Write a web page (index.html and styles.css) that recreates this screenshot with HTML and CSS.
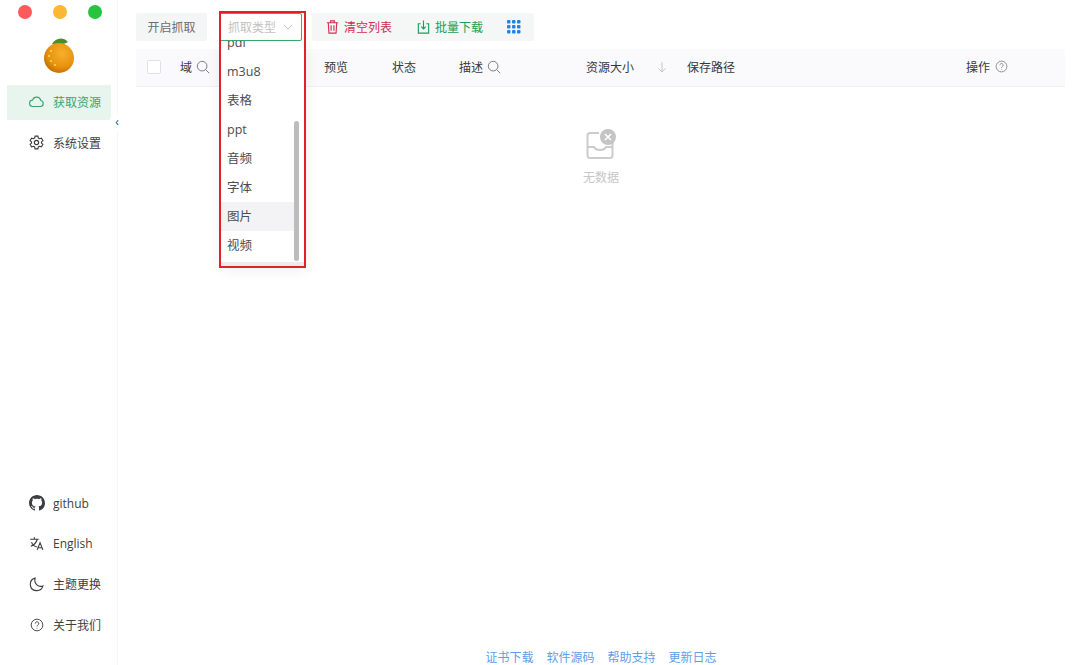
FILE: index.html
```html
<!DOCTYPE html>
<html lang="zh-CN">
<head>
  <meta charset="UTF-8" />
  <meta name="viewport" content="width=device-width, initial-scale=1.0" />
  <title>获取资源</title>
  <link rel="stylesheet" href="styles.css">
</head>
<body>
  <aside class="sidebar">
    <div class="traffic">
      <span class="dot dot-red"></span>
      <span class="dot dot-yellow"></span>
      <span class="dot dot-green"></span>
    </div>
    <div class="logo">
      <svg width="34" height="38" viewBox="0 0 34 38">
        <defs>
          <radialGradient id="orange" cx="0.6" cy="0.35" r="0.75">
            <stop offset="0" stop-color="#f6b02c"/>
            <stop offset="0.6" stop-color="#e8930c"/>
            <stop offset="1" stop-color="#b76206"/>
          </radialGradient>
        </defs>
        <path d="M10 8C13 2 21 0 26 6C21 9 15 9 10 8Z" fill="#4f8a2e"/>
        <circle cx="17" cy="22" r="15" fill="url(#orange)"/>
        <circle cx="9" cy="15" r="1" fill="#fbdc5c"/>
        <circle cx="7" cy="20" r="1" fill="#fbdc5c"/>
        <circle cx="9" cy="25" r="1" fill="#fbdc5c"/>
        <circle cx="13" cy="29" r="1" fill="#fbdc5c"/>
      </svg>
    </div>
    <nav class="menu menu-top">
      <a class="menu-item active">
        <svg class="menu-icon" viewBox="0 0 24 24"><path d="M7 19a4.500 4.500 0 0 1-.6-9A6 6 0 0 1 18 10.500a4.300 4.300 0 0 1-.5 8.500Z"/></svg>
        获取资源
      </a>
      <a class="menu-item">
        <svg class="menu-icon" viewBox="0 0 24 24"><circle cx="12" cy="12" r="3"/><path d="M10 3h4l.6 2.700 1.800 1 2.600-.8 2 3.400-2 1.900v1.600l2 1.900-2 3.400-2.600-.8-1.800 1L14 21h-4l-.6-2.700-1.800-1-2.600.8-2-3.400 2-1.900v-1.600l-2-1.900 2-3.400 2.600.8 1.800-1Z"/></svg>
        系统设置
      </a>
    </nav>
    <span class="collapse">‹</span>
    <nav class="menu menu-bottom">
      <a class="menu-item">
        <svg class="menu-icon solid" viewBox="0 0 16 16"><path d="M8 0C3.580 0 0 3.580 0 8c0 3.540 2.290 6.530 5.470 7.590.4.070.55-.17.55-.38 0-.19-.01-.82-.01-1.490-2.010.37-2.530-.49-2.690-.94-.09-.23-.48-.94-.82-1.130-.28-.15-.68-.52-.01-.53.63-.01 1.080.58 1.230.82.720 1.210 1.870.87 2.330.66.070-.52.280-.87.510-1.070-1.780-.2-3.640-.89-3.640-3.950 0-.87.310-1.590.820-2.150-.08-.2-.36-1.020.080-2.120 0 0 .670-.21 2.200.82.640-.18 1.320-.27 2-.27s1.360.09 2 .27c1.530-1.040 2.200-.82 2.200-.82.440 1.100.160 1.920.080 2.120.510.560.820 1.270.820 2.150 0 3.070-1.870 3.750-3.650 3.950.290.250.540.730.540 1.480 0 1.070-.01 1.930-.01 2.200 0 .210.150.460.550.380A8 8 0 0 0 16 8c0-4.420-3.580-8-8-8Z"/></svg>
        github
      </a>
      <a class="menu-item">
        <svg class="menu-icon" viewBox="0 0 24 24"><path d="M3 6h12M9 3v3M5 10c1 3 4 6 8 7M13 6c-1 4-4 8-9 10M13 21l4-10 4 10M14.500 18h5"/></svg>
        English
      </a>
      <a class="menu-item">
        <svg class="menu-icon" viewBox="0 0 24 24"><path d="M10 3a9 9 0 1 0 11 11c-6 2.500-13-3-11-11Z"/></svg>
        主题更换
      </a>
      <a class="menu-item">
        <svg class="menu-icon small" viewBox="0 0 24 24"><circle cx="12" cy="12" r="10"/><path d="M9 9.500a3 3 0 1 1 4.500 2.600c-1 .6-1.500 1.200-1.500 2.400M12 17v1"/></svg>
        关于我们
      </a>
    </nav>
  </aside>

  <main class="content">
    <div class="toolbar">
      <button class="btn-start">开启抓取</button>
      <div class="select">
        <span>抓取类型</span>
        <svg width="10" height="6" viewBox="0 0 10 6"><path d="M1 1l4 4 4-4" fill="none" stroke="#c4c4c4"/></svg>
      </div>
      <div class="btn-group">
        <a class="action red">
          <svg width="15" height="16" viewBox="0 0 16 16"><path d="M2 3.500h12M6 3.500V1.500h4v2M3.500 3.500l.7 11h7.600l.7-11M6.500 6v6M9.500 6v6"/></svg>
          清空列表
        </a>
        <a class="action green">
          <svg width="15" height="16" viewBox="0 0 16 16"><path d="M5 4.500H2.500v10h11v-10H11M8 1v9M5.500 7.500L8 10l2.500-2.500"/></svg>
          批量下载
        </a>
        <svg class="grid-icon" width="14" height="14" viewBox="0 0 14 14">
          <rect x="0" y="0" width="3.500" height="3.500" rx="1"/><rect x="5" y="0" width="3.500" height="3.500" rx="1"/><rect x="10" y="0" width="3.500" height="3.500" rx="1"/>
          <rect x="0" y="5" width="3.500" height="3.500" rx="1"/><rect x="5" y="5" width="3.500" height="3.500" rx="1"/><rect x="10" y="5" width="3.500" height="3.500" rx="1"/>
          <rect x="0" y="10" width="3.500" height="3.500" rx="1"/><rect x="5" y="10" width="3.500" height="3.500" rx="1"/><rect x="10" y="10" width="3.500" height="3.500" rx="1"/>
        </svg>
      </div>
    </div>

    <div class="table-head">
      <div class="col col-check"><span class="checkbox"></span></div>
      <div class="col col-domain">域
        <svg class="head-icon" viewBox="0 0 16 16"><circle cx="7" cy="7" r="5.500"/><path d="M11 11l4 4"/></svg>
      </div>
      <div class="col col-preview">预览</div>
      <div class="col col-status">状态</div>
      <div class="col col-desc">描述
        <svg class="head-icon" viewBox="0 0 16 16"><circle cx="7" cy="7" r="5.500"/><path d="M11 11l4 4"/></svg>
      </div>
      <div class="col col-size">资源大小
        <svg class="sort-icon" width="10" height="12" viewBox="0 0 10 12"><path d="M5 1v10M1.500 7.500L5 11l3.500-3.500"/></svg>
      </div>
      <div class="col col-path">保存路径</div>
      <div class="col col-op">操作
        <svg class="head-icon help" viewBox="0 0 24 24"><circle cx="12" cy="12" r="10"/><path d="M9 9.500a3 3 0 1 1 4.500 2.600c-1 .6-1.500 1.200-1.500 2.400M12 17v1"/></svg>
      </div>
    </div>

    <div class="empty">
      <svg width="30" height="32" viewBox="0 0 30 32">
        <path d="M13 4H4a2.500 2.500 0 0 0-2.500 2.500v20A2.500 2.500 0 0 0 4 29h20a2.500 2.500 0 0 0 2.500-2.500V12" fill="none" stroke="#ccc" stroke-width="2"/>
        <path d="M2 18h6c2 4 10 4 12 0h6" fill="none" stroke="#ccc" stroke-width="2"/>
        <circle cx="22" cy="8" r="8" fill="#c4c4c4"/>
        <path d="M19 5l6 6M25 5l-6 6" stroke="#fff" stroke-width="1.600"/>
      </svg>
      <span>无数据</span>
    </div>

    <footer class="footer">
      <a>证书下载</a>
      <a>软件源码</a>
      <a>帮助支持</a>
      <a>更新日志</a>
    </footer>

    <div class="dropdown">
      <div class="option-list">
        <div class="option">pdf</div>
        <div class="option">m3u8</div>
        <div class="option">表格</div>
        <div class="option">ppt</div>
        <div class="option">音频</div>
        <div class="option">字体</div>
        <div class="option hover">图片</div>
        <div class="option">视频</div>
      </div>
      <span class="scrollbar"></span>
    </div>
    <div class="highlight"></div>
  </main>
</body>
</html>
```

FILE: styles.css
```css
* {
  box-sizing: border-box;
}

html, body {
  height: 100%;
}

body {
  margin: 0;
  display: flex;
  height: 665px;
  overflow: hidden;
  background: #fff;
  color: #333639;
  font-family: "Open Sans", "Noto Sans CJK SC", sans-serif;
  font-size: 12px;
}

a {
  text-decoration: none;
}

/* sidebar */
.sidebar {
  position: relative;
  width: 118px;
  flex: none;
  display: flex;
  flex-direction: column;
  border-right: 1px solid #f6f6f6;
}

.traffic {
  display: flex;
  gap: 21px;
  padding: 5px 0 0 18px;
}

.dot {
  width: 14px;
  height: 14px;
  border-radius: 50%;
}

.dot-red { background: #fd5a5d; }
.dot-yellow { background: #fdb733; }
.dot-green { background: #27c53f; }

.logo {
  display: flex;
  justify-content: center;
  padding-left: 1px;
  margin-top: 17px;
  height: 44px;
}

.menu {
  margin: 5px 6px 0 7px;
  display: flex;
  flex-direction: column;
  gap: 6px;
}

.menu-top .menu-item {
  padding-bottom: 2px;
}

.menu-bottom {
  margin-top: auto;
  margin-bottom: 23px;
  gap: 5.500px;
}

.menu-item {
  height: 35px;
  display: flex;
  align-items: center;
  padding-left: 21px;
  gap: 8px;
  color: #3c3f42;
  white-space: nowrap;
}

.menu-item.active {
  background: #e7f5ee;
  color: #36a56f;
}

.menu-icon {
  width: 17px;
  height: 17px;
  flex: none;
  fill: none;
  stroke: currentColor;
  stroke-width: 1.600;
}

.menu-icon.solid {
  fill: currentColor;
  stroke: none;
  width: 16px;
  height: 16px;
  margin-left: 1px;
}

.menu-icon.small {
  width: 14px;
  height: 14px;
  margin: 0 1px 0 2px;
}

.collapse {
  position: absolute;
  left: 109px;
  top: 114px;
  width: 16px;
  height: 18px;
  border-radius: 50%;
  background: #fff;
  text-align: center;
  font-size: 12px;
  line-height: 16px;
  color: #444;
}

/* main area */
.content {
  position: relative;
  flex: 1;
  min-width: 0;
  padding: 13px 15px 0 18px;
  display: flex;
  flex-direction: column;
}

.toolbar {
  display: flex;
  align-items: flex-start;
  height: 28px;
}

.btn-start {
  width: 71px;
  height: 28px;
  border: none;
  border-radius: 2px;
  background: #f4f5f5;
  color: #6b6d70;
  font: inherit;
}

.select {
  width: 83px;
  height: 28px;
  margin-left: 12px;
  border: 1px solid #36ad6a;
  border-radius: 2px;
  display: flex;
  align-items: center;
  padding-left: 8px;
  gap: 7px;
  color: #c2c2c2;
  background: #fff;
}

.btn-group {
  margin-left: 10px;
  width: 222px;
  height: 28px;
  background: #f5f6f6;
  border-radius: 2px;
  display: flex;
  align-items: center;
  padding-left: 13px;
}

.action {
  display: flex;
  align-items: center;
  gap: 4px;
  margin-right: 24px;
}

.action svg {
  fill: none;
  stroke: currentColor;
  stroke-width: 1.200;
}

.red { color: #d03050; }
.green { color: #18a058; }

.grid-icon {
  fill: #2080f0;
}

.table-head {
  margin-top: 8px;
  height: 38px;
  display: flex;
  align-items: center;
  padding-bottom: 2px;
  background: #fafafc;
  border-bottom: 1px solid #eff0f2;
  color: #36393c;
}

.col {
  display: flex;
  align-items: center;
  flex: none;
  white-space: nowrap;
}

.col-check { width: 44px; padding-left: 11px; }
.col-domain { width: 144px; }
.col-preview { width: 68px; }
.col-status { width: 67px; }
.col-desc { width: 127px; }
.col-size { width: 101px; }
.col-path { width: 279px; }

.checkbox {
  width: 14px;
  height: 14px;
  border: 1px solid #e0e0e6;
  border-radius: 2px;
  background: #fff;
}

.head-icon {
  width: 14px;
  height: 14px;
  margin-left: 4px;
  fill: none;
  stroke: #77797c;
  stroke-width: 1.100;
}

.help {
  width: 13px;
  height: 13px;
  margin-left: 5px;
  stroke-width: 1.500;
}

.sort-icon {
  margin-left: 23px;
  fill: none;
  stroke: #c6c6c8;
}

.empty {
  margin-top: 42px;
  margin-left: 447px;
  width: 36px;
  display: flex;
  flex-direction: column;
  align-items: center;
  gap: 7px;
  color: #c6c6c8;
}

.footer {
  margin-top: auto;
  margin-left: 1px;
  height: 14px;
  line-height: 14px;
  display: flex;
  justify-content: center;
  gap: 13px;
  color: #5f9ee8;
}

/* open select panel and the red mark that was drawn over the screenshot */
.dropdown {
  position: absolute;
  left: 103px;
  top: 41px;
  width: 84px;
  height: 225px;
  overflow: hidden;
  background: #fff;
  border-bottom: 4px solid #ececec;
  box-shadow: 0 3px 14px rgba(0, 0, 0, 0.08);
}

/* list is scrolled, so its first row is partly hidden under the select */
.option-list {
  margin-top: -13px;
}

.option {
  height: 29px;
  line-height: 29px;
  width: 73px;
  padding-left: 6px;
  font-size: 12.500px;
  color: #4a4c4f;
}

.option.hover {
  background: #f3f3f5;
}

.scrollbar {
  position: absolute;
  left: 73px;
  top: 80px;
  width: 5px;
  height: 140px;
  border-radius: 3px;
  background: #bcbcbc;
}

.highlight {
  position: absolute;
  left: 101px;
  top: 11px;
  width: 87px;
  height: 257px;
  border: 2px solid #e1202c;
  pointer-events: none;
}
```
